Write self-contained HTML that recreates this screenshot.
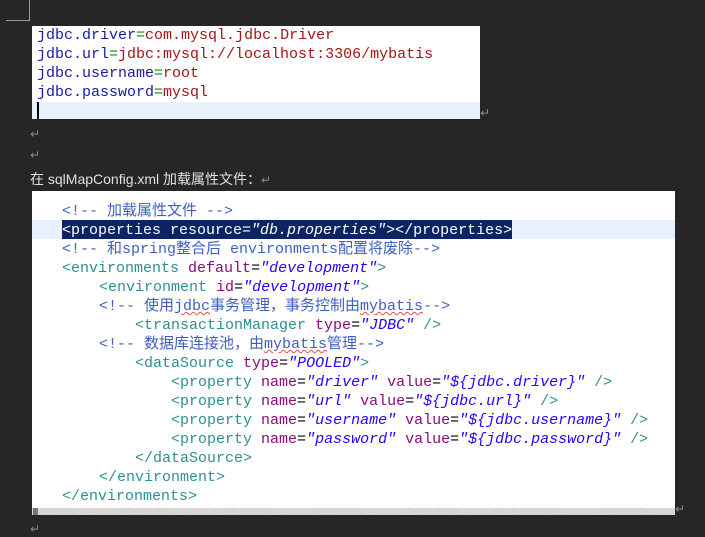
<!DOCTYPE html>
<html><head><meta charset="utf-8"><style>
body{margin:0;width:705px;height:537px;background:#262626;position:relative;overflow:hidden;font-family:"Liberation Mono","Noto Sans CJK SC",monospace}
.ab{position:absolute}
.ret{position:absolute;color:#8a8a8a;font:12px "DejaVu Sans",sans-serif}
.box1{left:32px;top:26px;width:448px;height:93px;background:#fff}
.l{position:absolute;white-space:pre;font-size:15px;line-height:19px;height:19px}
.k{color:#1a1aa6}.e{color:#0a8a0a}.v{color:#a31515}
.box2{left:32px;top:191px;width:643px;height:324px;background:#fff;overflow:hidden}
.t{color:#2f8f8f}.a{color:#8b0a7a}.s{color:#2a00ff;font-style:italic}.c{color:#3f5fbf}
.u{text-decoration:underline wavy #e05050;text-decoration-thickness:1px}
</style></head><body>
<div class="ab" style="left:29px;top:0;width:1px;height:21px;background:#999"></div>
<div class="ab" style="left:6px;top:20px;width:24px;height:1px;background:#999"></div>
<div class="ab box1">
 <div class="ab" style="left:0;top:76px;width:448px;height:17px;background:#e8f0fb"></div>
 <div class="ab" style="left:5px;top:76px;width:2px;height:17px;background:#000"></div>
 <div class="l" style="left:5px;top:0px"><span class="k">jdbc.driver</span><span class="e">=</span><span class="v">com.mysql.jdbc.Driver</span></div>
 <div class="l" style="left:5px;top:19px"><span class="k">jdbc.url</span><span class="e">=</span><span class="v">jdbc:mysql://localhost:3306/mybatis</span></div>
 <div class="l" style="left:5px;top:38px"><span class="k">jdbc.username</span><span class="e">=</span><span class="v">root</span></div>
 <div class="l" style="left:5px;top:57px"><span class="k">jdbc.password</span><span class="e">=</span><span class="v">mysql</span></div>
</div>
<div class="ret" style="left:480px;top:106px">↵</div>
<div class="ret" style="left:30px;top:127px">↵</div>
<div class="ret" style="left:30px;top:148px">↵</div>
<div class="ab" style="left:30px;top:169px;color:#e0e0e0;font:14px 'Liberation Sans','Noto Sans CJK SC',sans-serif">在 sqlMapConfig.xml 加载属性文件：<span style="color:#8a8a8a;font-size:12px">↵</span></div>
<div class="ab box2">
 <div class="ab" style="left:0;top:29px;width:643px;height:19px;background:#e8f0fb"></div>
 <div class="ab" style="left:30px;top:29px;width:450px;height:19px;background:#0c2461"></div>
 <div class="l" style="left:30px;top:11px"><span class="c">&lt;!-- 加载属性文件 --&gt;</span></div>
 <div class="l" style="left:30px;top:30px;color:#fff">&lt;properties resource=<i>"db.properties"</i>&gt;&lt;/properties&gt;</div>
 <div class="l" style="left:30px;top:49px"><span class="c">&lt;!-- 和spring整合后 environments配置将废除--&gt;</span></div>
 <div class="l" style="left:30px;top:68px"><span class="t">&lt;environments</span> <span class="a">default</span>=<span class="s">"development"</span><span class="t">&gt;</span></div>
 <div class="l" style="left:67px;top:87px"><span class="t">&lt;environment</span> <span class="a">id</span>=<span class="s">"development"</span><span class="t">&gt;</span></div>
 <div class="l" style="left:67px;top:106px"><span class="c">&lt;!-- 使用<span class="u">jdbc</span>事务管理，事务控制由<span class="u">mybatis</span>--&gt;</span></div>
 <div class="l" style="left:103px;top:125px"><span class="t">&lt;transactionManager</span> <span class="a">type</span>=<span class="s">"JDBC"</span> <span class="t">/&gt;</span></div>
 <div class="l" style="left:67px;top:144px"><span class="c">&lt;!-- 数据库连接池，由<span class="u">mybatis</span>管理--&gt;</span></div>
 <div class="l" style="left:103px;top:163px"><span class="t">&lt;dataSource</span> <span class="a">type</span>=<span class="s">"POOLED"</span><span class="t">&gt;</span></div>
 <div class="l" style="left:139px;top:182px"><span class="t">&lt;property</span> <span class="a">name</span>=<span class="s">"driver"</span> <span class="a">value</span>=<span class="s">"${jdbc.driver}"</span> <span class="t">/&gt;</span></div>
 <div class="l" style="left:139px;top:201px"><span class="t">&lt;property</span> <span class="a">name</span>=<span class="s">"url"</span> <span class="a">value</span>=<span class="s">"${jdbc.url}"</span> <span class="t">/&gt;</span></div>
 <div class="l" style="left:139px;top:220px"><span class="t">&lt;property</span> <span class="a">name</span>=<span class="s">"username"</span> <span class="a">value</span>=<span class="s">"${jdbc.username}"</span> <span class="t">/&gt;</span></div>
 <div class="l" style="left:139px;top:239px"><span class="t">&lt;property</span> <span class="a">name</span>=<span class="s">"password"</span> <span class="a">value</span>=<span class="s">"${jdbc.password}"</span> <span class="t">/&gt;</span></div>
 <div class="l" style="left:103px;top:258px"><span class="t">&lt;/dataSource&gt;</span></div>
 <div class="l" style="left:67px;top:277px"><span class="t">&lt;/environment&gt;</span></div>
 <div class="l" style="left:30px;top:296px"><span class="t">&lt;/environments&gt;</span></div>
 <div class="ab" style="left:0;top:317px;width:643px;height:7px;background:repeating-linear-gradient(45deg,#c8c8c8 0 1px,#e4e4e4 1px 2px)"></div>
 <div class="ab" style="left:1px;top:317px;width:5px;height:7px;background:#777"></div>
</div>
<div class="ret" style="left:675px;top:502px">↵</div>
<div class="ret" style="left:30px;top:522px">↵</div>
</body></html>
